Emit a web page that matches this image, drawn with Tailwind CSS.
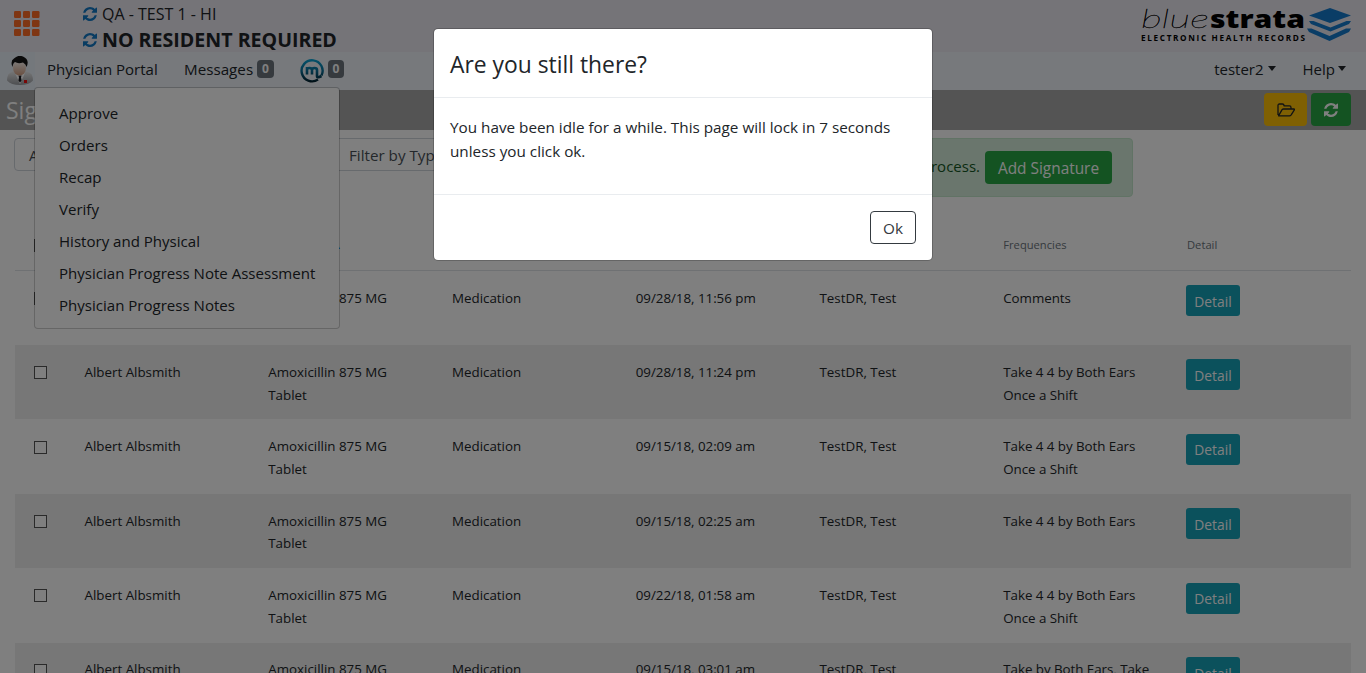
<!DOCTYPE html>
<html lang="en"><head><meta charset="utf-8"><title>Signatures</title>
<script src="https://cdn.jsdelivr.net/npm/@tailwindcss/browser@4"></script></head>
<body class="relative h-[673px] overflow-hidden bg-white font-['Open_Sans',sans-serif] text-[15px] leading-6 text-[#212529]">
<svg class="hidden">
  <symbol id="sync" viewBox="0 0 1536 1536"><path d="M1511 928q0 5-1 7-64 268-268 434.500T764 1536q-146 0-282.500-55T238 1324l-129 129q-19 19-45 19t-45-19-19-45V960q0-26 19-45t45-19h448q26 0 45 19t19 45-19 45l-137 137q71 66 161 102t187 36q134 0 250-65t186-179q11-17 53-117 8-23 30-23h192q13 0 22.500 9.500t9.500 22.500zm25-800v448q0 26-19 45t-45 19h-448q-26 0-45-19t-19-45 19-45l138-138Q969 256 768 256q-134 0-250 65T332 500q-11 17-53 117-8 23-30 23H50q-13 0-22.500-9.500T18 608v-7q65-268 270-434.500T768 0q146 0 284 55.500T1297 212l130-129q19-19 45-19t45 19 19 45z"/></symbol>
</svg>

<header class="flex h-[52px] justify-between bg-[#ebe8f1]">
  <div class="flex">
    <svg class="ml-3.5 mt-[11px] h-[25px] w-[26px]" viewBox="0 0 26 25" fill="#ff6d26"><g id="r"><rect width="7" height="7" rx="1.200"/><rect x="9" width="7" height="7" rx="1.200"/><rect x="18" width="7.500" height="7" rx="1.200"/></g><use href="#r" y="9"/><use href="#r" y="18"/></svg>
    <div class="ml-[43px] pt-0.5">
      <div class="flex h-6 items-center gap-[5px]"><svg class="size-[14px] fill-[#1278c4]"><use href="#sync"/></svg><span class="text-[16px]">QA - TEST 1 - HI</span></div>
      <div class="flex h-[27px] items-center gap-[5px]"><svg class="size-[14px] fill-[#1278c4]"><use href="#sync"/></svg><span class="text-[19.600px] font-bold">NO RESIDENT REQUIRED</span></div>
    </div>
  </div>
  <svg class="mr-[14px] h-12 w-[212px]" viewBox="1140 0 212 48">
    <g fill="#000">
      <text x="1141" y="27.500" font-family="Lato, sans-serif" font-size="25" font-weight="100" font-style="italic" stroke="#000" stroke-width=".3" textLength="68" lengthAdjust="spacingAndGlyphs">blue</text>
      <text x="1210" y="27.500" font-family="Open Sans, sans-serif" font-size="24" font-weight="800" textLength="95" lengthAdjust="spacingAndGlyphs">strata</text>
      <text x="1141" y="41" font-family="Open Sans, sans-serif" font-size="8.200" font-weight="700" textLength="164">ELECTRONIC HEALTH RECORDS</text>
    </g>
    <g fill="#147acc"><path d="M1330 8l21 7.500-21 7.500-21-7.500z"/><path d="M1309 21l4.500 0 17 6.500 16-6.500h4.500l-2 3-18.500 7.500-19.500-7.500zM1307 28.500h4.500l18 7.500 16.500-7.500h5l-2 3.500-19.500 9-20.500-9z"/></g>
  </svg>
</header>

<nav class="flex h-[38px] items-center bg-[#e9f0f8]">
  <svg class="ml-[7px] h-[30px] w-[26px]" viewBox="0 0 26 30">
    <defs><linearGradient id="coat" x2="0" y2="1"><stop stop-color="#eee"/><stop offset="1" stop-color="#9b9ea3"/></linearGradient><linearGradient id="face" x2="0" y2="1"><stop stop-color="#fff"/><stop offset="1" stop-color="#d4a184"/></linearGradient></defs>
    <path d="M7 15L3 17Q0 19 0 24.500q4 4.500 13 4.500t13-4.500q0-5.500-3-7.500l-5-2z" fill="url(#coat)"/>
    <path d="M8 17l5 11 5-11-5 2z" fill="#fff"/><path d="M11.500 19.500h3l-.5 2 .6 3-1.600 2-1.600-2 .6-3z" fill="#16161c"/>
    <ellipse cx="12.500" cy="11.500" rx="6.500" ry="8" fill="url(#face)"/>
    <path d="M5.500 11Q3 5 7 2.500q4-4 9-2 7 3 3.500 10.500-.5-3-3.500-4.500-5 1.500-8-.5-2 1-2.500 5" fill="#151515"/>
    <rect x="17" y="24" width="3" height="3" fill="#e11"/>
  </svg>
  <div class="ml-0.5 flex h-full grow items-center bg-[#eef3f9] pb-[4px] pl-3">
    <span class="w-[137px]">Physician Portal</span>
    <span class="w-[73px] text-[15.200px]">Messages</span>
    <span class="flex h-[18px] w-[17px] items-center justify-center rounded bg-[#6c757d] text-[12px] font-bold text-white">0</span>
    <svg class="ml-[26px] mt-1 size-6" viewBox="0 0 24 24"><defs><linearGradient id="mg" x2="0" y2="24" gradientUnits="userSpaceOnUse"><stop stop-color="#08a6d8"/><stop offset=".5" stop-color="#0a6f98"/><stop offset="1" stop-color="#001722"/></linearGradient></defs>
      <g fill="none" stroke="url(#mg)"><path d="M18 20.500A10.500 10.500 0 1 1 21.500 16.500" stroke-width="2.400"/><path d="M7 15.500V8M7 10.500q0-1.500 2.500-1.500T12 11v4.500M12 11q0-2 2.500-2T17 11v6q0 2.500 4.500 0" stroke-width="2.600"/></g></svg>
    <span class="ml-1 flex h-[18px] w-4 items-center justify-center rounded bg-[#6c757d] text-[12px] font-bold text-white">0</span>
    <span class="ml-auto">tester2</span><i class="-mt-0.5 ml-1 border-x-[4.500px] border-t-[5px] border-x-transparent border-t-[#212529]"></i>
    <span class="ml-[27px]">Help</span><i class="-mt-0.5 ml-[3px] mr-[18px] border-x-[4.500px] border-t-[5px] border-x-transparent border-t-[#212529]"></i><i class="w-[2px]"></i>
  </div>
</nav>

<div class="flex h-10 items-center bg-[#a8a8a8] pb-px pl-1.5 pr-[15px]">
  <h1 class="grow text-[23px] text-white">Signatures</h1>
  <button class="mr-1 flex h-[33px] w-[43px] items-center justify-center rounded bg-[#ffc107]"><svg class="h-[14px] w-[18px]" viewBox="0 0 18 14" fill="none" stroke="#212529" stroke-width="1.300" stroke-linejoin="round"><path d="M1 12V2.500Q1 1 2.500 1h3Q7 1 7 2.800h5.500Q14 2.800 14 4.500V6M1.500 12.800l3.600-6.100Q5.600 6 6.500 6h10.700q.6.300 0 1.200l-3 4.600q-.8 1-1.800 1z"/></svg></button>
  <button class="flex h-[33px] w-10 items-center justify-center rounded bg-[#28a745]"><svg class="size-[14px] fill-white"><use href="#sync"/></svg></button>
</div>

<main class="px-[15px]">
  <div class="flex h-[84.600px] items-start pt-2">
    <div class="-ml-px flex h-[33px] w-[315px] items-center rounded border border-[#ced4da] pl-3.5 text-[#495057]">All</div>
    <div class="ml-[5px] flex h-[33px] w-[190px] items-center rounded border border-[#ced4da] pl-3.5 text-[15.200px] text-[#495057]">Filter by Type</div>
    <div class="ml-auto mr-[218px] flex h-[59px] w-[580px] items-center justify-end rounded border border-[#c3e6cb] bg-[#d4edda] pr-5 text-[#155724]"><span class="pb-[3px]">Add a signature to start the signing process.</span><button class="ml-[5px] h-[33px] w-[127px] rounded bg-[#28a745] pt-0.5 text-[15.400px] text-white">Add Signature</button></div>
  </div>
  <table class="w-[1336px] table-fixed text-[13.350px] leading-[22.750px]">
    <colgroup><col class="w-[53.500px]"><col class="w-[183.750px]"><col class="w-[183.750px]"><col class="w-[183.750px]"><col class="w-[183.750px]"><col class="w-[183.750px]"><col class="w-[183.750px]"><col></colgroup>
    <thead><tr class="h-[56px] border-b border-[#dee2e6] text-left text-[11.200px] text-[#6c757d]">
      <th class="pl-[19px] pt-[7px]"><input type="checkbox" class="block size-[13px] appearance-none border border-[#555] bg-white"></th>
      <th class="pl-4 pt-[7px] font-normal">Resident</th><th class="pl-4 pt-[7px] font-normal">Description <span class="text-[#007bff]">▲</span></th><th class="pl-4 pt-[7px] font-normal">Type</th><th class="pl-4 pt-[7px] font-normal">Date</th><th class="pl-4 pt-[7px] font-normal">Physician</th><th class="pl-4 pt-[7px] font-normal">Frequencies</th><th class="pl-4 pt-[7px] font-normal">Detail</th></tr></thead>
    <tbody id="rows"></tbody>
  </table>
</main>

<!-- Physician Portal menu -->
<div class="absolute left-[34px] top-[87px] flex h-[242px] w-[306px] flex-col rounded border border-black/20 bg-white bg-clip-padding pl-6 pt-[9px] text-[15.050px] leading-8">
  <a>Approve</a><a>Orders</a><a>Recap</a><a>Verify</a><a>History and Physical</a><a>Physician Progress Note Assessment</a><a>Physician Progress Notes</a>
</div>

<!-- Idle dialog -->
<div class="absolute inset-0 bg-black/50">
  <div class="mx-auto mt-7 h-[233px] w-[500px] rounded-[5px] border border-black/20 bg-white bg-clip-padding">
    <div class="flex h-[69px] items-center border-b border-[#e9ecef] pl-4 pt-1 text-[22.850px]">Are you still there?</div>
    <div class="h-[97px] border-b border-[#e9ecef] px-4 pt-[17px] text-[15.270px]">You have been idle for a while. This page will lock in 7 seconds<br>unless you click ok.</div>
    <div class="flex justify-end pr-[16px] pt-4"><button class="h-[33px] w-[46px] rounded border border-[#343a40] text-[15.300px] text-[#343a40]">Ok</button></div>
  </div>
</div>

<script>
const rows = [
  ['09/28/18, 11:56 pm', 'Comments'],
  ['09/28/18, 11:24 pm', 'Take 4 4 by Both Ears<br>Once a Shift'],
  ['09/15/18, 02:09 am', 'Take 4 4 by Both Ears<br>Once a Shift'],
  ['09/15/18, 02:25 am', 'Take 4 4 by Both Ears'],
  ['09/22/18, 01:58 am', 'Take 4 4 by Both Ears<br>Once a Shift'],
  ['09/15/18, 03:01 am', 'Take by Both Ears, Take'],
];
document.getElementById('rows').innerHTML = rows.map(([date, freq]) => `
  <tr class="h-[74.400px] align-top even:bg-[#eeeeee]">
    <td class="pl-[19px] pt-[21.200px]"><input type="checkbox" class="block size-[13px] appearance-none border border-[#555] bg-white"></td>
    <td class="pl-4 pt-[15.850px]">Albert Albsmith</td><td class="pl-4 pt-[15.850px]">Amoxicillin 875 MG<br>Tablet</td>
    <td class="pl-4 pt-[15.850px]">Medication</td><td class="pl-4 pt-[15.850px] tracking-[-0.030px]">${date}</td><td class="pl-4 pt-[15.850px]">TestDR, Test</td>
    <td class="pl-4 pt-[15.850px] tracking-[-0.040px]">${freq}</td>
    <td class="pl-[15px] pt-[14.400px]"><button class="block h-[31px] w-[54px] rounded-[3px] bg-[#17a2b8] pt-[3px] text-[13.800px] text-white">Detail</button></td>
  </tr>`).join('');
</script>
</body></html>
